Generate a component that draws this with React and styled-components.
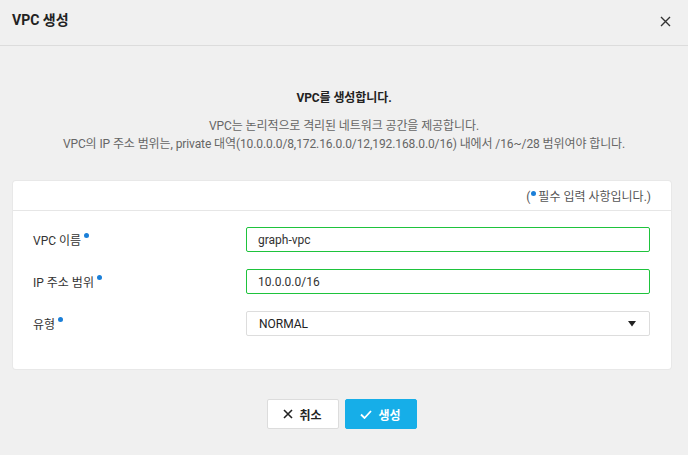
import React from "react";
import styled, { createGlobalStyle } from "styled-components";

const GlobalStyle = createGlobalStyle`
  body {
    margin: 0;
    background: #f0f0f0;
    font-family: Roboto, "Noto Sans CJK KR", sans-serif;
    color: #333;
  }
`;

const FIELDS = [
  { label: "VPC 이름", value: "graph-vpc", valid: true },
  { label: "IP 주소 범위", value: "10.0.0.0/16", valid: true },
  { label: "유형", value: "NORMAL", select: true },
];

const App = () => {
  return (
    <Page>
      <GlobalStyle />
      <Header>
        <Title>VPC 생성</Title>
        <CloseButton aria-label="close">
          <svg width="11" height="11" viewBox="0 0 11 11">
            <path d="M1 1L10 10M10 1L1 10" stroke="#333" strokeWidth="1.4" />
          </svg>
        </CloseButton>
      </Header>

      <Intro>
        <Lead>VPC를 생성합니다.</Lead>
        <Desc>
          VPC는 논리적으로 격리된 네트워크 공간을 제공합니다.
          <br />
          VPC의 IP 주소 범위는, private 대역(10.0.0.0/8,172.16.0.0/12,192.168.0.0/16) 내에서 /16~/28 범위여야 합니다.
        </Desc>
      </Intro>

      <Card>
        <CardHead>
          <span>
            (<Dot $inline />필수 입력 사항입니다.)
          </span>
        </CardHead>
        <CardBody>
          {FIELDS.map((field) => (
            <Row key={field.label}>
              <Label>
                {field.label}
                <Dot />
              </Label>
              {field.select ? (
                <SelectBox>
                  <span>{field.value}</span>
                  <svg width="8" height="6" viewBox="0 0 8 6">
                    <path d="M0 0H8L4 5.5Z" fill="#222" />
                  </svg>
                </SelectBox>
              ) : (
                <Input $valid={field.valid}>{field.value}</Input>
              )}
            </Row>
          ))}
        </CardBody>
      </Card>

      <Actions>
        <ActionButton>
          <svg width="10" height="10" viewBox="0 0 10 10">
            <path d="M1 1L9 9M9 1L1 9" stroke="#222" strokeWidth="1.6" />
          </svg>
          취소
        </ActionButton>
        <ActionButton $primary>
          <svg width="12" height="9" viewBox="0 0 12 9">
            <path d="M1 4.5L4.5 8L11 1" stroke="#fff" strokeWidth="1.8" fill="none" />
          </svg>
          생성
        </ActionButton>
      </Actions>
    </Page>
  );
};

const Page = styled.div`
  width: 688px;
  min-height: 455px;
  display: flex;
  flex-direction: column;
`;

const Header = styled.div`
  height: 46px;
  box-sizing: border-box;
  border-bottom: 1px solid #dcdcdc;
  display: flex;
  justify-content: space-between;
  align-items: flex-start;
  padding: 10px 17px 0 12px;
`;

const Title = styled.h1`
  margin: 0;
  font-size: 14px;
  line-height: 20px;
  font-weight: 700;
  color: #222;
`;

const CloseButton = styled.button`
  border: 0;
  background: none;
  padding: 0;
  margin-top: 6px;
  display: flex;
  cursor: pointer;
`;

const Intro = styled.div`
  margin-top: 43px;
  text-align: center;
  font-size: 12px;
  line-height: 18px;
  letter-spacing: -0.1px;
`;

const Lead = styled.p`
  margin: 0 0 10px;
  font-weight: 700;
  color: #222;
`;

const Desc = styled.p`
  margin: 0;
  color: #666;
`;

const Card = styled.div`
  margin: 28px 17px 0 13px;
  background: #fff;
  border-radius: 3px;
  box-shadow: 0 0 0 1px #e8e8e8;
`;

const CardHead = styled.div`
  height: 30px;
  box-sizing: border-box;
  border-bottom: 1px solid #e6e6e6;
  display: flex;
  align-items: center;
  justify-content: flex-end;
  padding-right: 20px;
  font-size: 12px;
  color: #555;
`;

const Dot = styled.span`
  display: inline-block;
  width: 5px;
  height: 5px;
  border-radius: 50%;
  background: #1a7fd8;
  margin: ${({ $inline }) => ($inline ? "0 2px 0 1px" : "0 0 0 3px")};
  align-self: flex-start;
  vertical-align: top;
  position: relative;
  top: ${({ $inline }) => ($inline ? "4px" : "2px")};
`;

const CardBody = styled.div`
  padding: 16px 21px 33px 20px;
  display: flex;
  flex-direction: column;
  gap: 17px;
`;

const Row = styled.div`
  display: flex;
  align-items: center;
  height: 25px;
`;

const Label = styled.div`
  width: 213px;
  display: flex;
  align-items: center;
  font-size: 12px;
  color: #333;
`;

const Input = styled.div`
  flex: 1;
  height: 25px;
  box-sizing: border-box;
  border: 1px solid ${({ $valid }) => ($valid ? "#1ec33c" : "#ddd")};
  border-radius: 2px;
  padding: 0 11px;
  display: flex;
  align-items: center;
  font-size: 12px;
  color: #333;
`;

const SelectBox = styled(Input)`
  justify-content: space-between;
  padding: 0 13px 0 12px;
  color: #222;
`;

const Actions = styled.div`
  margin-top: 30px;
  display: flex;
  justify-content: center;
  gap: 6px;
  padding-right: 5px;
`;

const ActionButton = styled.button`
  width: 72px;
  height: 30px;
  box-sizing: border-box;
  border-radius: 2px;
  border: 1px solid ${({ $primary }) => ($primary ? "#16aee8" : "#dcdcdc")};
  background: ${({ $primary }) => ($primary ? "#16aee8" : "#fff")};
  color: ${({ $primary }) => ($primary ? "#fff" : "#222")};
  font-family: Roboto, "Noto Sans CJK KR", sans-serif;
  font-size: 12px;
  font-weight: 700;
  display: flex;
  align-items: center;
  justify-content: center;
  gap: 6px;
  padding: 0;
  cursor: pointer;
`;

export default App;
